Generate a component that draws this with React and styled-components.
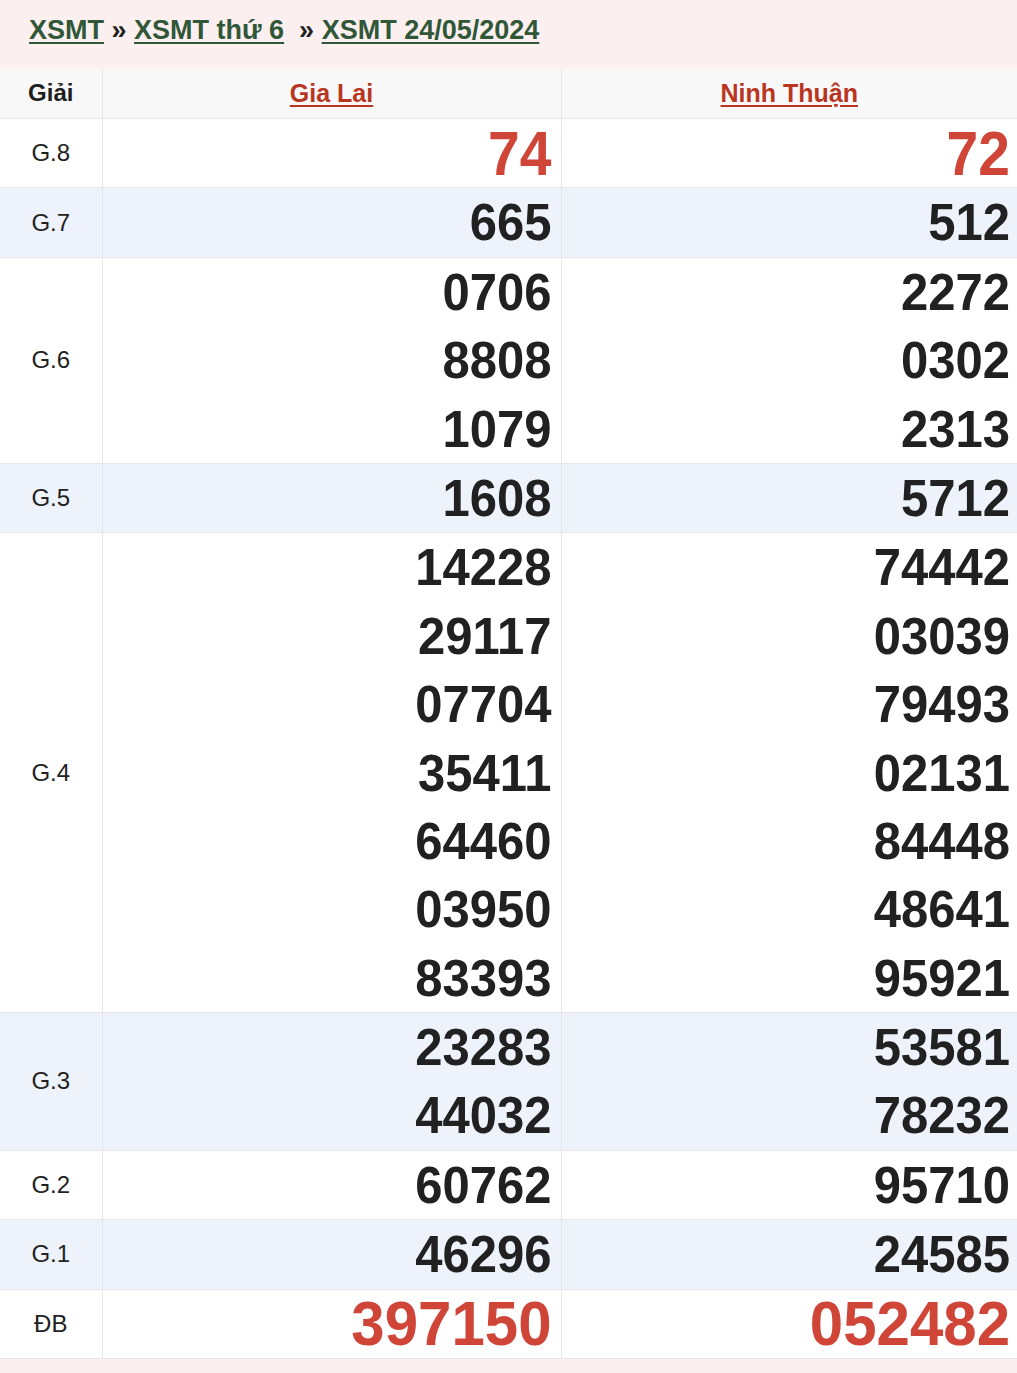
import React from 'react';
import styled, { createGlobalStyle } from 'styled-components';

const GlobalStyle = createGlobalStyle`
	body {
		margin: 0;
		background: #fcefef;
		font-family: "Liberation Sans", Arial, sans-serif;
	}
`;

const Breadcrumb = styled.div`
	height: 68px;
	box-sizing: border-box;
	padding: 15px 0 0 29px;
	font-size: 27px;
	font-weight: bold;
	color: #222;
	white-space: pre;
`;

const Crumb = styled.a`
	color: #2f5738;
	text-decoration: underline;
	text-underline-offset: 3px;
	text-decoration-thickness: 2px;
`;

const Table = styled.table`
	width: 1017px;
	border-collapse: collapse;
	table-layout: fixed;
	background: #fff;
`;

const HeadCell = styled.th`
	height: 50px;
	background: #f8f8f8;
	border: 1px solid #e6e6e6;
	border-top: none;
	font-size: ${(p) => (p.$label ? '24px' : '25px')};
	font-weight: bold;
	color: #1e1e1e;
	text-align: center;
	padding: 0;
	&:first-child { border-left: none; }
	&:last-child { border-right: none; }
`;

const Province = styled.a`
	color: #b8361f;
	text-decoration: underline;
	text-underline-offset: 3px;
	text-decoration-thickness: 2px;
`;

const Row = styled.tr`
	background: ${(p) => (p.$alt ? '#eef3fb' : '#fff')};
`;

const Label = styled.td`
	border: 1px solid #e6e6e6;
	border-left: none;
	text-align: center;
	font-size: 24px;
	color: #222;
	padding: 0;
`;

const Cell = styled.td`
	border: 1px solid #e6e6e6;
	padding: 0 9px 0 0;
	text-align: right;
	&:last-child { border-right: none; padding-right: 7px; }
`;

const Line = styled.div`
	height: 68.4px;
	line-height: 68.4px;
`;

const Num = styled.span`
	display: inline-block;
	font-weight: bold;
	font-size: ${(p) => (p.$size === 'xl' ? '60px' : p.$size === 'lg' ? '57px' : '49px')};
	transform: scaleY(${(p) => (p.$size === 'lg' ? 1.1 : 1.06)});
	color: ${(p) => (p.$red ? '#cf4538' : '#212121')};
`;

const prizes = [
	{ name: 'G.8', a: ['74'], b: ['72'], red: true, size: 'lg' },
	{ name: 'G.7', a: ['665'], b: ['512'], alt: true },
	{ name: 'G.6', a: ['0706', '8808', '1079'], b: ['2272', '0302', '2313'] },
	{ name: 'G.5', a: ['1608'], b: ['5712'], alt: true },
	{
		name: 'G.4',
		a: ['14228', '29117', '07704', '35411', '64460', '03950', '83393'],
		b: ['74442', '03039', '79493', '02131', '84448', '48641', '95921'],
	},
	{ name: 'G.3', a: ['23283', '44032'], b: ['53581', '78232'], alt: true },
	{ name: 'G.2', a: ['60762'], b: ['95710'] },
	{ name: 'G.1', a: ['46296'], b: ['24585'], alt: true },
	{ name: 'ĐB', a: ['397150'], b: ['052482'], red: true, size: 'xl' },
];

const Numbers = ({ list, red, size }) =>
	list.map((n, i) => (
		<Line key={i}>
			<Num $red={red} $size={size}>{n}</Num>
		</Line>
	));

const App = () => (
	<>
		<GlobalStyle />
		<Breadcrumb>
			<Crumb href="#">XSMT</Crumb> » <Crumb href="#">XSMT thứ 6</Crumb>  » <Crumb href="#">XSMT 24/05/2024</Crumb>
		</Breadcrumb>
		<Table>
			<colgroup>
				<col style={{ width: 102 }} />
				<col style={{ width: 459 }} />
				<col style={{ width: 456 }} />
			</colgroup>
			<thead>
				<tr>
					<HeadCell $label>Giải</HeadCell>
					<HeadCell><Province href="#">Gia Lai</Province></HeadCell>
					<HeadCell><Province href="#">Ninh Thuận</Province></HeadCell>
				</tr>
			</thead>
			<tbody>
				{prizes.map((p) => (
					<Row key={p.name} $alt={p.alt}>
						<Label>{p.name}</Label>
						<Cell>
							<Numbers list={p.a} red={p.red} size={p.size} />
						</Cell>
						<Cell>
							<Numbers list={p.b} red={p.red} size={p.size} />
						</Cell>
					</Row>
				))}
			</tbody>
		</Table>
	</>
);

export default App;
